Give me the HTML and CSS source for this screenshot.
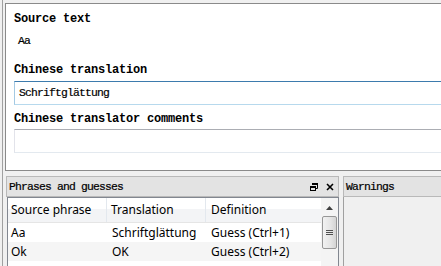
FILE: index.html
```html
<!DOCTYPE html>
<html>
<head>
<meta charset="utf-8">
<link rel="stylesheet" href="styles.css">
</head>
<body>
<div class="window">
  <div class="editor">
    <div class="label">Source text</div>
    <div class="source">Aa</div>
    <div class="label label-tr">Chinese translation</div>
    <div class="edit edit-focus">Schriftglättung</div>
    <div class="label label-cm">Chinese translator comments</div>
    <div class="edit edit-plain"></div>
  </div>
  <div class="docks">
    <div class="dock phrases">
      <div class="titlebar">
        <span class="title">Phrases and guesses</span>
        <span class="tbtns">
          <svg class="ico" width="8" height="8" viewBox="0 0 8 8">
            <path d="M2.5 0.5h5v5h-2" fill="none" stroke="#000" stroke-width="1"/>
            <rect x="2" y="0" width="6" height="2" fill="#000"/>
            <rect x="0.5" y="3.5" width="5" height="4" fill="none" stroke="#000" stroke-width="1"/>
            <rect x="0" y="3" width="6" height="2" fill="#000"/>
          </svg>
          <svg class="ico close" width="8" height="8" viewBox="0 0 8 8">
            <path d="M1 1L7 7M7 1L1 7" stroke="#000" stroke-width="1.6"/>
          </svg>
        </span>
      </div>
      <div class="table">
        <div class="tmain">
          <div class="thead">
            <div class="c c1">Source phrase</div>
            <div class="c c2">Translation</div>
            <div class="c c3">Definition</div>
          </div>
          <div class="row">
            <div class="c c1">Aa</div>
            <div class="c c2">Schriftglättung</div>
            <div class="c c3">Guess (Ctrl+1)</div>
          </div>
          <div class="row alt">
            <div class="c c1">Ok</div>
            <div class="c c2">OK</div>
            <div class="c c3">Guess (Ctrl+2)</div>
          </div>
        </div>
        <div class="vscroll">
          <div class="sbtn"><svg width="7" height="4" viewBox="0 0 7 4"><path d="M3.5 0L7 4H0z" fill="#404040"/></svg></div>
          <div class="thumb"><span></span><span></span><span></span></div>
        </div>
      </div>
    </div>
    <div class="dock warnings">
      <div class="titlebar"><span class="title">Warnings</span></div>
      <div class="wbody"></div>
    </div>
  </div>
</div>
</body>
</html>
```
FILE: styles.css
```css
html, body {
  margin: 0;
  padding: 0;
  background: #f0f0f0;
  overflow: hidden;
}
.window {
  width: 439px;
  height: 266px;
  margin-left: 2px;
  border-left: 1px solid #a0a0a0;
  padding-top: 3px;
  box-sizing: border-box;
  overflow: hidden;
  background: #f0f0f0;
}
.editor {
  margin-left: 2px;
  width: 470px;
  height: 168px;
  box-sizing: border-box;
  border: 1px solid #8a8a8a;
  background: #fff;
  padding: 8px 0 0 8px;
}
.label {
  font-family: "Liberation Mono", monospace;
  font-weight: bold;
  font-size: 12px;
  letter-spacing: -0.2px;
  line-height: 14px;
  height: 14px;
  color: #000;
}
.source {
  font-family: "Liberation Mono", monospace;
  font-size: 11.4px;
  letter-spacing: -0.84px;
  line-height: 14px;
  height: 14px;
  margin-top: 8px;
  padding-left: 4px;
  -webkit-text-stroke: 0.2px #000;
}
.label-tr { margin-top: 15px; }
.label-cm { margin-top: 7px; }
.edit {
  height: 24px;
  box-sizing: border-box;
  margin-top: 4px;
  width: 460px;
  font-family: "Liberation Mono", monospace;
  font-size: 11.4px;
  letter-spacing: -0.84px;
  -webkit-text-stroke: 0.2px #000;
  line-height: 20px;
  padding-left: 4px;
  padding-top: 1px;
}
.edit-focus {
  border-top: 1px solid #3d7bad;
  border-left: 1px solid #a4c9e3;
  border-right: 1px solid #b5cfe7;
  border-bottom: 1px solid #b7d9ed;
}
.edit-plain {
  margin-top: 3px;
  border-top: 1px solid #abadb3;
  border-left: 1px solid #e2e3ea;
  border-right: 1px solid #dbdfe6;
  border-bottom: 1px solid #e3e9ef;
}
.docks {
  display: flex;
  margin-top: 5px;
  margin-left: 3px;
  gap: 4px;
}
.dock { display: flex; flex-direction: column; }
.phrases { width: 333px; }
.warnings { flex: 1; }
.titlebar {
  height: 21px;
  box-sizing: border-box;
  border: 1px solid #b9b9b9;
  background: #e3e3e3;
  display: flex;
  align-items: center;
  padding-left: 2px;
  font-family: "Liberation Mono", monospace;
  font-size: 11.4px;
  letter-spacing: -0.84px;
  -webkit-text-stroke: 0.2px #000;
  color: #000;
}
.warnings .titlebar { border-right: none; }
.title { flex: 1; padding-top: 1px; }
.tbtns { display: flex; gap: 8px; align-items: center; padding-right: 4px; padding-top: 1px; }
.ico { display: block; }
.table {
  margin-left: 1px;
  height: 80px;
  box-sizing: border-box;
  border: 1px solid #828790;
  border-bottom: none;
  background: #fff;
  display: flex;
}
.tmain { flex: 1; font-family: "Noto Sans", sans-serif; font-size: 12px; color: #000; }
.thead {
  display: flex;
  height: 25px;
  box-sizing: border-box;
  border-bottom: 1px solid #e5e5e5;
  background: linear-gradient(#ffffff 0%, #ffffff 45%, #f3f4f6 46%, #f3f4f6 100%);
  line-height: 24px;
}
.thead .c1, .thead .c2 { border-right: 1px solid #e3e8ee; }
.c { white-space: nowrap; overflow: hidden; box-sizing: border-box; }
.c1 { width: 99px; padding-left: 3px; }
.c2 { width: 99px; padding-left: 4px; }
.c3 { flex: 1; padding-left: 5px; }
.row .c2 { padding-left: 5px; }
.row .c3 { padding-left: 5px; }
.row { display: flex; height: 19px; line-height: 19px; }
.row.alt { background: #f5f5f5; }
.vscroll {
  width: 17px;
  background: #f4f4f4;
  display: flex;
  flex-direction: column;
  align-items: center;
}
.sbtn { height: 18px; width: 17px; display: flex; align-items: center; justify-content: center; padding-top: 1px; box-sizing: border-box; }
.thumb {
  width: 15px;
  height: 33px;
  box-sizing: border-box;
  border: 1px solid #979797;
  border-radius: 2px;
  background: linear-gradient(90deg, #f2f2f2, #e4e4e4 60%, #d4d4d4);
  display: flex;
  flex-direction: column;
  align-items: center;
  justify-content: center;
  gap: 1px;
}
.thumb span { display: block; width: 7px; height: 1px; background: #505050; }
.wbody {
  height: 80px;
  border-left: 1px solid #a0a0a0;
  background: #f0f0f0;
}
```
